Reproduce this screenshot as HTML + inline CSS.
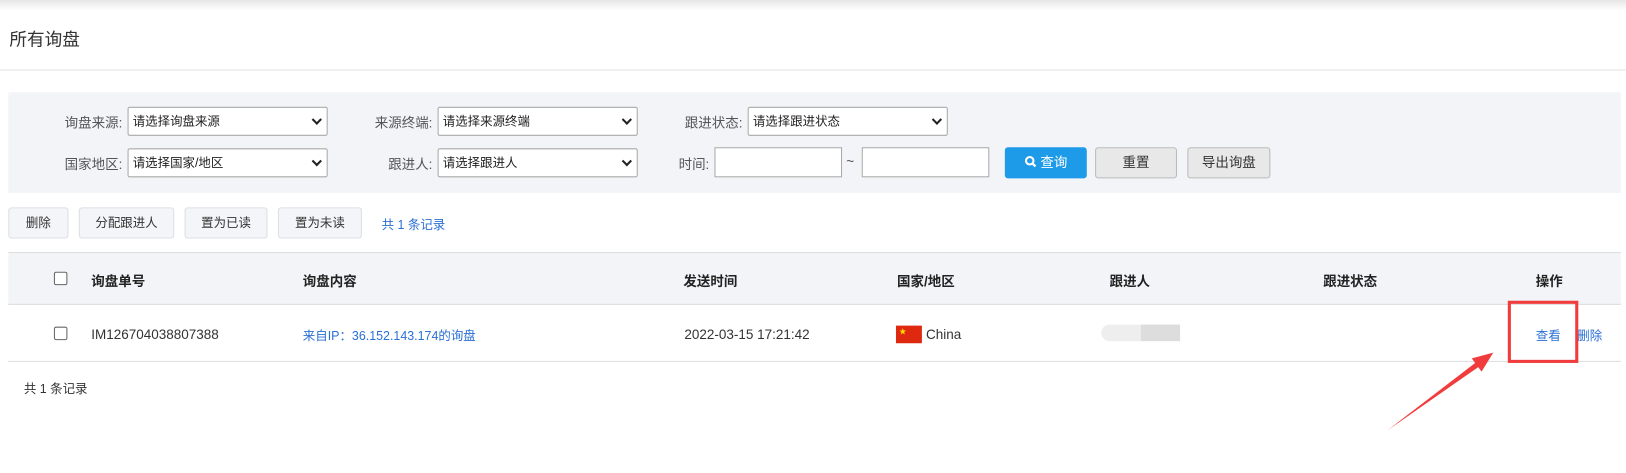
<!DOCTYPE html>
<html><head><meta charset="utf-8"><style>
*{box-sizing:border-box;margin:0;padding:0}
body{width:1626px;height:472px;background:#fff;font-family:"Liberation Sans","Noto Sans CJK SC",sans-serif;font-size:12px;color:#333;position:relative;overflow:hidden}
#w{position:absolute;left:0;top:0;width:1568px;height:456px;transform:scale(1.037);transform-origin:0 0}
.a{position:absolute}
.top{left:0;top:0;width:1568px;height:10px;background:linear-gradient(#e6e6e6,#fff)}
.sel{position:absolute;height:28px;border:1px solid #a9a9a9;border-radius:2px;background:#fff;font-size:12px;line-height:26px;padding-left:4px;color:#222}
.sel:after{content:"";position:absolute;right:6px;top:8px;width:5px;height:5px;border-right:2px solid #222;border-bottom:2px solid #222;transform:rotate(45deg)}
.inp{position:absolute;height:29px;border:1px solid #a9a9a9;background:#fff}
.lbl{position:absolute;font-size:13px;color:#555;text-align:right}
.btn{position:absolute;height:30px;border:1px solid #dcdfe6;border-radius:3px;background:#f4f5f8;font-size:12px;text-align:center;line-height:28px;color:#333}
.th{position:absolute;font-size:13px;font-weight:bold;color:#222;top:261px}
.cb{position:absolute;width:13px;height:13px;border:1px solid #666;border-radius:2px;background:#fff}
</style></head><body><div id="w">
<div class="a top"></div>
<div class="a" style="left:9px;top:24px;font-size:17px;color:#333">所有询盘</div>
<div class="a" style="left:0;top:67px;width:1568px;height:1px;background:#e2e2e2"></div>
<div class="a" style="left:8px;top:89px;width:1555px;height:97px;background:#f3f4f8"></div>
<div class="lbl" style="left:24px;top:108px;width:94px">询盘来源:</div>
<div class="sel" style="left:123px;top:103px;width:193px">请选择询盘来源</div>
<div class="lbl" style="left:24px;top:148px;width:94px">国家地区:</div>
<div class="sel" style="left:123px;top:143px;width:193px">请选择国家/地区</div>
<div class="lbl" style="left:320px;top:108px;width:97px">来源终端:</div>
<div class="sel" style="left:422px;top:103px;width:193px">请选择来源终端</div>
<div class="lbl" style="left:320px;top:148px;width:97px">跟进人:</div>
<div class="sel" style="left:422px;top:143px;width:193px">请选择跟进人</div>
<div class="lbl" style="left:620px;top:108px;width:96px">跟进状态:</div>
<div class="sel" style="left:721px;top:103px;width:193px">请选择跟进状态</div>
<div class="lbl" style="left:600px;top:148px;width:84px">时间:</div>
<div class="inp" style="left:689px;top:142px;width:123px"></div>
<div class="a" style="left:816px;top:148px;font-size:13px;color:#555">~</div>
<div class="inp" style="left:831px;top:142px;width:123px"></div>
<div class="btn" style="left:969px;top:142px;width:79px;background:#1e9be8;border-color:#1e9be8;color:#fff;font-size:13px">
<svg width="12" height="12" viewBox="0 0 12 12" style="vertical-align:-1px"><circle cx="5" cy="5" r="3.6" fill="none" stroke="#fff" stroke-width="2"/><path d="M7.5 7.5L10.5 10.5" stroke="#fff" stroke-width="2.2"/></svg> 查询</div>
<div class="btn" style="left:1056px;top:142px;width:79px;background:#e8e8e8;border-color:#bbb;font-size:13px">重置</div>
<div class="btn" style="left:1145px;top:142px;width:80px;background:#e8e8e8;border-color:#bbb;font-size:13px">导出询盘</div>
<div class="btn" style="left:8px;top:200px;width:58px">删除</div>
<div class="btn" style="left:76px;top:200px;width:92px">分配跟进人</div>
<div class="btn" style="left:178px;top:200px;width:80px">置为已读</div>
<div class="btn" style="left:268px;top:200px;width:81px">置为未读</div>
<div class="a" style="left:368px;top:208px;color:#2a6fd6">共 1 条记录</div>
<div class="a" style="left:8px;top:243px;width:1555px;height:51px;background:#f3f4f8;border-top:1px solid #ddd;border-bottom:1px solid #ddd"></div>
<div class="cb" style="left:52px;top:262px"></div>
<div class="th" style="left:88px">询盘单号</div>
<div class="th" style="left:292px">询盘内容</div>
<div class="th" style="left:659px">发送时间</div>
<div class="th" style="left:865px">国家/地区</div>
<div class="th" style="left:1070px">跟进人</div>
<div class="th" style="left:1276px">跟进状态</div>
<div class="th" style="left:1481px">操作</div>
<div class="cb" style="left:52px;top:315px"></div>
<div class="a" style="left:88px;top:315px;font-size:13px;color:#333">IM126704038807388</div>
<div class="a" style="left:292px;top:315px;color:#2a6fd6">来自IP：36.152.143.174的询盘</div>
<div class="a" style="left:660px;top:315px;font-size:13px;color:#333">2022-03-15 17:21:42</div>
<div class="a" style="left:864px;top:314px;width:25px;height:17px;background:#de2910"><span class="a" style="left:3px;top:1px;color:#ffde00;font-size:7px">★</span></div>
<div class="a" style="left:893px;top:315px;font-size:13px;color:#333">China</div>
<div class="a" style="left:1100px;top:313px;width:38px;height:16px;background:#ddd"></div>
<div class="a" style="left:1062px;top:313px;width:38px;height:16px;background:#eee;border-radius:8px 0 0 8px"></div>
<div class="a" style="left:1481px;top:315px;color:#2a6fd6">查看</div>
<div class="a" style="left:1521px;top:315px;color:#2a6fd6">删除</div>
<div class="a" style="left:8px;top:348px;width:1555px;height:1px;background:#ddd"></div>
<div class="a" style="left:1454px;top:290px;width:68px;height:60px;border:3px solid #f03c3c"></div>
<svg class="a" style="left:1330px;top:330px" width="120" height="95"><path d="M8 85L92.5 20L89.3 15.6L110 10L98.7 28.4L95.5 24Z" fill="#f03c3c"/></svg>
<div class="a" style="left:23px;top:366px;color:#333">共 1 条记录</div>
</div></body></html>
